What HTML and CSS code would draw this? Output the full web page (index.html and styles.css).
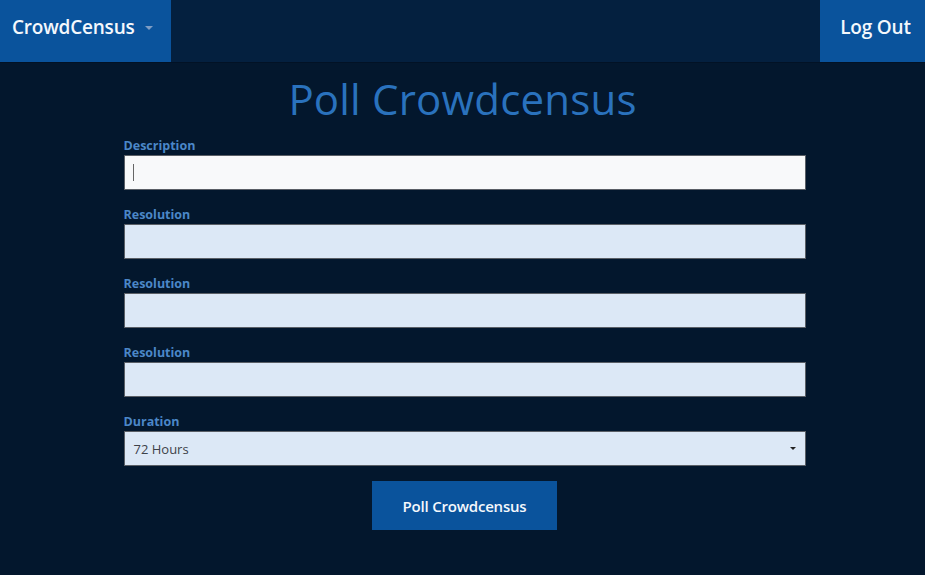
FILE: index.html
```html
<!DOCTYPE html>
<html>
<head>
<meta charset="utf-8">
<link rel="stylesheet" href="styles.css">
</head>
<body>
<nav class="navbar">
  <div class="brand">CrowdCensus <span class="caret"></span></div>
  <div class="logout">Log Out</div>
</nav>
<main class="content">
  <h1 class="title">Poll Crowdcensus</h1>
  <form class="poll-form">
    <div class="field">
      <label class="field-label">Description</label>
      <div class="input input-focus"><span class="cursor"></span></div>
    </div>
    <div class="field">
      <label class="field-label">Resolution</label>
      <div class="input"></div>
    </div>
    <div class="field">
      <label class="field-label">Resolution</label>
      <div class="input"></div>
    </div>
    <div class="field">
      <label class="field-label">Resolution</label>
      <div class="input"></div>
    </div>
    <div class="field field-last">
      <label class="field-label">Duration</label>
      <div class="input select"><span class="select-text">72 Hours</span><span class="select-caret"></span></div>
    </div>
    <div class="actions">
      <div class="submit">Poll Crowdcensus</div>
    </div>
  </form>
</main>
</body>
</html>
```
FILE: styles.css
```css
html, body {
  margin: 0;
  padding: 0;
}
body {
  background: #03172d;
  font-family: "Open Sans", "Liberation Sans", sans-serif;
  width: 925px;
  height: 575px;
  overflow: hidden;
}
.navbar {
  height: 62px;
  background: #04203f;
  display: flex;
  justify-content: space-between;
  border-bottom: 1px solid #021225;
}
.brand {
  width: 171px;
  box-sizing: border-box;
  background: #0a539c;
  color: #f4f8fc;
  font-size: 19px;
  font-weight: 600;
  display: flex;
  align-items: center;
  padding-left: 12px;
  padding-bottom: 8px;
  letter-spacing: -0.2px;
}
.caret {
  display: inline-block;
  width: 0;
  height: 0;
  border-left: 4px solid transparent;
  border-right: 4px solid transparent;
  border-top: 4px solid #7f9dc4;
  margin-left: 10px;
  margin-top: 2px;
}
.logout {
  width: 105px;
  box-sizing: border-box;
  background: #0a539c;
  color: #f4f8fc;
  font-size: 19px;
  font-weight: 600;
  display: flex;
  align-items: center;
  justify-content: center;
  padding-bottom: 8px;
  padding-left: 6px;
  letter-spacing: -0.2px;
}
.content {
  display: flex;
  flex-direction: column;
  align-items: center;
}
.title {
  margin: 12px 0 16px;
  font-size: 42px;
  line-height: 48px;
  font-weight: 400;
  color: #2a72bd;
  letter-spacing: 0.2px;
}
.poll-form {
  width: 682px;
  margin-left: 4px;
}
.field {
  display: flex;
  flex-direction: column;
  margin-bottom: 18px;
}
.field-last {
  margin-bottom: 15px;
}
.field-label {
  font-size: 12.5px;
  font-weight: 700;
  line-height: 16px;
  color: #4b87c8;
  margin-top: -1px;
  margin-bottom: 1px;
}
.input {
  height: 35px;
  box-sizing: border-box;
  background: #dce8f6;
  border: 1px solid #5a5f66;
  display: flex;
  align-items: center;
}
.input-focus {
  background: #f8f9fa;
}
.cursor {
  width: 1px;
  height: 17px;
  background: #666;
  margin-left: 8px;
}
.select {
  justify-content: space-between;
  padding: 0 9px 0 9px;
}
.select-text {
  font-size: 13px;
  color: #3d4249;
}
.select-caret {
  width: 0;
  height: 0;
  border-left: 3px solid transparent;
  border-right: 3px solid transparent;
  border-top: 3px solid #222;
}
.actions {
  display: flex;
  justify-content: center;
}
.submit {
  width: 185px;
  height: 49px;
  background: #0a539c;
  color: #f4f8fc;
  font-size: 15px;
  font-weight: 600;
  display: flex;
  align-items: center;
  justify-content: center;
  letter-spacing: -0.2px;
}
```
